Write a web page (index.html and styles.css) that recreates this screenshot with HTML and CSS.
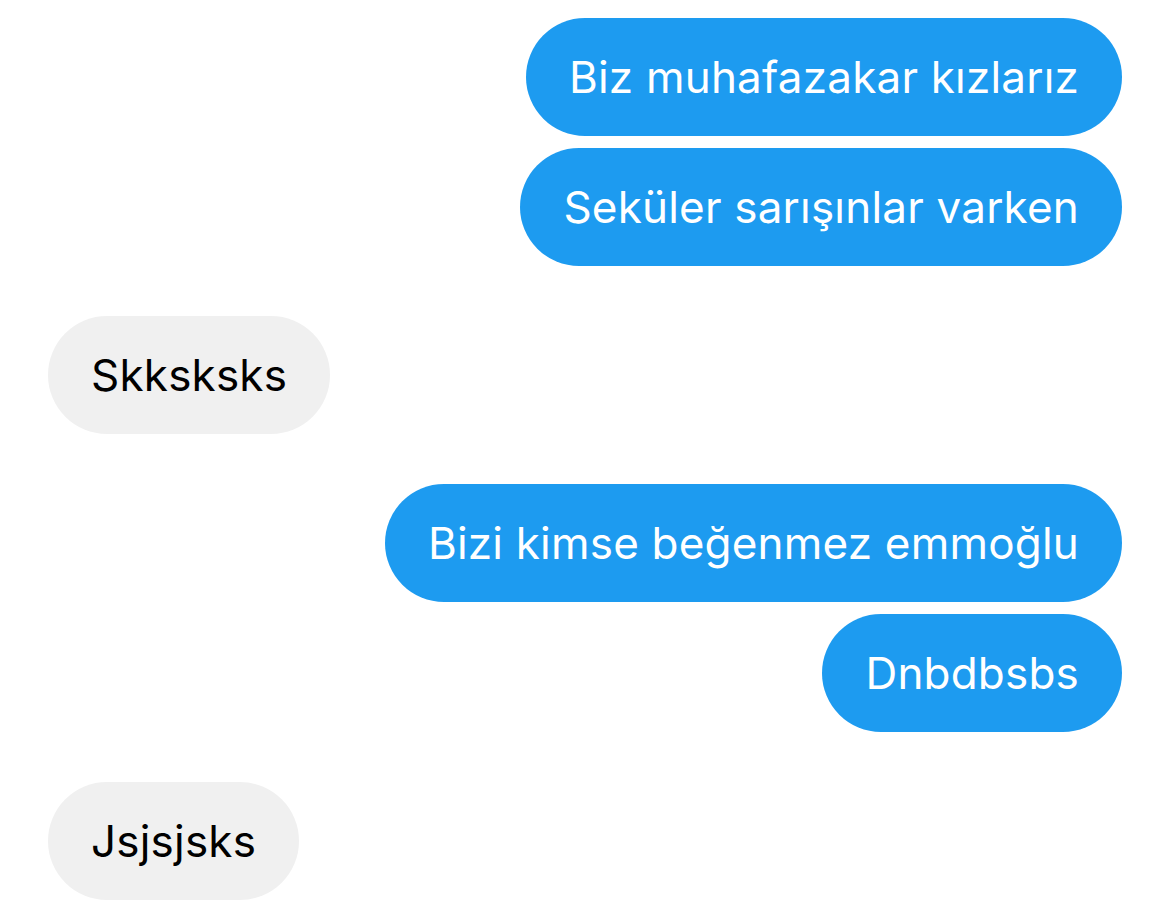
FILE: index.html
```html
<!DOCTYPE html>
<html lang="tr">
<head>
<meta charset="utf-8">
<link rel="stylesheet" href="styles.css">
</head>
<body>
<div class="chat">
  <div class="group sent">
    <div class="bubble">Biz muhafazakar kızlarız</div>
    <div class="bubble">Seküler sarışınlar varken</div>
  </div>
  <div class="group received">
    <div class="bubble">Skksksks</div>
  </div>
  <div class="group sent">
    <div class="bubble">Bizi kimse beğenmez emmoğlu</div>
    <div class="bubble">Dnbdbsbs</div>
  </div>
  <div class="group received">
    <div class="bubble">Jsjsjsks</div>
  </div>
</div>
</body>
</html>
```
FILE: styles.css
```css
html, body {
  margin: 0;
  padding: 0;
  background: #ffffff;
}
.chat {
  display: flex;
  flex-direction: column;
  gap: 50px;
  padding: 18px 48px 0 48px;
  font-family: Inter, "Noto Sans", sans-serif;
}
.group {
  display: flex;
  flex-direction: column;
  gap: 12px;
}
.group.sent { align-items: flex-end; }
.group.received { align-items: flex-start; }
.bubble {
  height: 118px;
  box-sizing: border-box;
  display: flex;
  align-items: center;
  padding: 0 43px;
  border-radius: 59px;
  font-size: 44px;
  letter-spacing: 0.2px;
  white-space: nowrap;
}
.sent .bubble {
  background: #1d9bf0;
  color: #ffffff;
}
.received .bubble {
  background: #f0f0f0;
  color: #000000;
}
```
